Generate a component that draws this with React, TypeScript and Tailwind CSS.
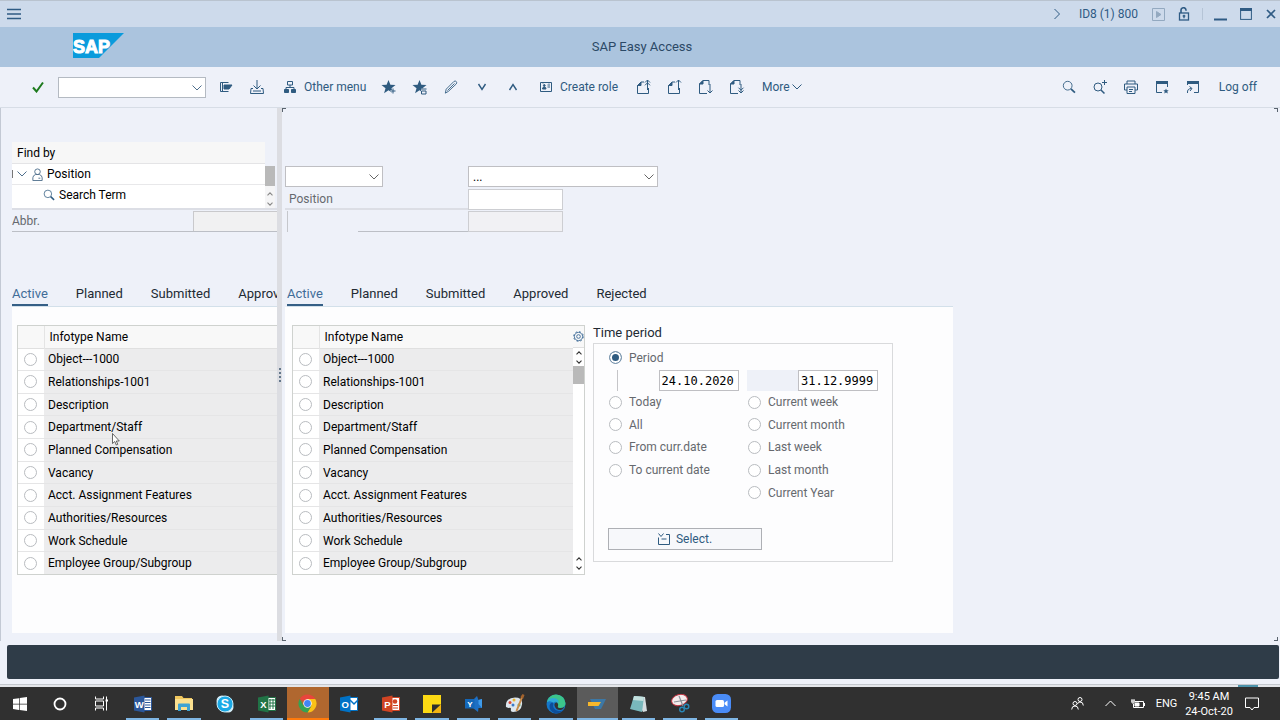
import type { ReactNode } from "react";

type IconProps = { children: ReactNode; size?: number; box?: string; className?: string };

function Icon({ children, size = 16, box = "0 0 16 16", className = "" }: IconProps) {
  return (
    <svg
      width={size}
      height={size}
      viewBox={box}
      fill="none"
      stroke="currentColor"
      strokeWidth="1"
      aria-hidden="true"
      className={`shrink-0 ${className}`}
    >
      {children}
    </svg>
  );
}

const ChevronDown = ({ className = "" }: { className?: string }) => (
  <svg width="10" height="6" viewBox="0 0 10 6" fill="none" stroke="currentColor" aria-hidden="true" className={className}>
    <path d="M.5.5 5 5 9.5.5" />
  </svg>
);

const SmallChevron = ({ up = false }: { up?: boolean }) => (
  <svg width="6" height="4" viewBox="0 0 6 4" fill="none" stroke="currentColor" strokeWidth="1.1" aria-hidden="true">
    <path d={up ? "M.5 3.3 3 .8l2.5 2.5" : "M.5.7 3 3.2 5.5.7"} />
  </svg>
);

const SearchIcon = ({ size = 14 }: { size?: number }) => (
  <Icon size={size}>
    <circle cx="6.5" cy="6.5" r="5" />
    <path d="m10.2 10.2 4.6 4.3" strokeWidth="2" />
  </Icon>
);

const star = "M6.5 0 8.400 4.800l5.100.2-4 3.200 1.400 5-4.400-2.900-4.400 2.900 1.400-5-4-3.200 5.100-.2Z";

function ToolButton({ label, children }: { label: string; children: ReactNode }) {
  return (
    <button aria-label={label} className="flex h-8 w-[31px] shrink-0 items-center justify-center">
      {children}
    </button>
  );
}

function TitleBar() {
  return (
    <div className="flex h-[27px] shrink-0 items-center border-t border-[#b9c3cf] bg-[#cddaeb] text-[#2f5b84]">
      <button aria-label="Menu" className="flex h-6 w-7 items-center justify-center">
        <svg width="14" height="12" viewBox="0 0 14 12" stroke="currentColor" strokeWidth="1.500" aria-hidden="true">
          <path d="M0 1.500h14M0 6h14M0 10.500h14" />
        </svg>
      </button>
      <div className="ml-auto flex items-center">
        <button aria-label="Expand" className="flex w-11 justify-center">
          <Icon size={12} box="0 0 12 12">
            <path d="m3.500 1 5 5-5 5" />
          </Icon>
        </button>
        <span>ID8 (1) 800</span>
        <button aria-label="Record" className="ml-2 flex w-6 justify-center text-[#93a9c0]">
          <Icon size={13} box="0 0 13 13">
            <path d="M.5.5h12v12H.5z" />
            <path d="M4.500 3.500v6l4.500-3z" fill="currentColor" />
          </Icon>
        </button>
        <button aria-label="Unlock" className="flex w-7 justify-center">
          <Icon size={14} box="0 0 14 14">
            <path d="M4 6V3.500a2.500 2.500 0 0 1 5-.5v.8" strokeWidth="1.600" />
            <rect x="2.500" y="6" width="9" height="7" strokeWidth="1.300" />
            <path d="M7 7.800v3.400M5.700 9h2.600" strokeWidth="1.300" />
          </Icon>
        </button>
        <span className="mx-1 h-3 w-px bg-[#b5c4d6]" />
        <button aria-label="Minimize" className="flex w-[26px] justify-center">
          <Icon size={13} box="0 0 13 13">
            <path d="M0 11.500h13" strokeWidth="2" />
          </Icon>
        </button>
        <button aria-label="Maximize" className="flex w-[26px] justify-center">
          <Icon size={12} box="0 0 12 12">
            <rect x=".6" y=".6" width="10.800" height="10.800" />
            <path d="M0 1.500h12" strokeWidth="3" />
          </Icon>
        </button>
        <button aria-label="Close" className="flex w-[21px] justify-end pr-1">
          <Icon size={10} box="0 0 10 10">
            <path d="m1 1 8 8M9 1 1 9" strokeWidth="1.700" />
          </Icon>
        </button>
      </div>
    </div>
  );
}

function Header() {
  return (
    <header className="grid h-10 shrink-0 grid-cols-[1fr_auto_1fr] items-center bg-[#abc4de]">
      <svg width="51" height="25" viewBox="0 0 51 25" role="img" aria-label="SAP" className="mb-1 ml-[73px]">
        <path d="M0 0h51L26 25H0Z" fill="#0a9bdc" />
        <text x="0" y="19.500" fontFamily="Liberation Sans, sans-serif" fontWeight="700" fontSize="18" fill="#fff" stroke="#fff" strokeWidth="1">
          SAP
        </text>
      </svg>
      <h1 className="pl-1 text-[13px] text-[#2b4966]">SAP Easy Access</h1>
    </header>
  );
}

function PageIcon({ up, double }: { up: boolean; double: boolean }) {
  return (
    <Icon>
      <path d={up ? "M8 3H5L1.500 6.500v8h11V9" : "M11 6V1.500H5L1.500 5v9.500H9"} />
      <path d={up ? "M5 3v3.500H1.500Z" : "M5 1.500V5H1.500Z"} fill="currentColor" />
      <path d={up ? "M11.500 11V1M9 3.500 11.500 1 14 3.500" : "M12 5v9M9.500 11.500 12 14l2.500-2.500"} />
      {double && <path d={up ? "M9 6.300l2.500-2.500L14 6.300" : "M9.500 8.700 12 11.200l2.500-2.500"} />}
    </Icon>
  );
}

function Toolbar() {
  return (
    <div className="flex h-[41px] shrink-0 items-center border-b border-[#d7dde6] text-[#2f5b80]">
      <button aria-label="Enter" className="ml-[22px] flex w-8 justify-center text-[#1d7a1d]">
        <Icon size={12} box="0 0 12 12">
          <path d="m1 6.500 3.500 4L11 1.500" strokeWidth="2" />
        </Icon>
      </button>
      <div className="relative mr-1 ml-1 h-[21px] w-[148px] text-[#4f6f8d]">
        <input aria-label="Command" className="size-full border border-[#b4bac2] bg-white px-1" />
        <ChevronDown className="pointer-events-none absolute top-2 right-1" />
      </div>
      <ToolButton label="Open menu">
        <Icon size={14} box="0 0 14 14">
          <path d="M9.500 2.500h-8v9h8M3.500 2.500v9" />
          <path d="M5 5h8l-3 4H5z" fill="currentColor" />
        </Icon>
      </ToolButton>
      <ToolButton label="Save">
        <Icon size={14} box="0 0 14 14">
          <path d="M7 0v8.500M3.500 5.500 7 9l3.500-3.500M3 8.500H1L.5 13.500h13l-.5-5h-2M3 11h8" />
        </Icon>
      </ToolButton>
      <button className="flex h-8 w-[101px] items-center gap-2 pl-3">
        <Icon size={12} box="0 0 12 12">
          <path d="M3.500.5h5v3.500h-5zM6 4v2.500M2 8.500v-2h8v2" />
          <path d="M.5 8.500h4v3h-4zM7.500 8.500h4v3h-4z" fill="currentColor" />
        </Icon>
        Other menu
      </button>
      <ToolButton label="Add favorite">
        <Icon>
          <path d={star} transform="translate(1 1)" fill="currentColor" stroke="none" />
          <path d="M12 9.500v5.500M9.500 12h5" stroke="#eef1f9" strokeWidth="2" />
          <path d="M12 9.500v5M9.500 12h5" />
        </Icon>
      </ToolButton>
      <ToolButton label="Delete favorite">
        <Icon>
          <path d={star} transform="translate(1 1)" fill="currentColor" stroke="none" />
          <path d="M9 9.500h6v6H9z" fill="#eef1f9" stroke="none" />
          <path d="M9 10h5.500M9.500 12h4.500v3H9.500z" />
        </Icon>
      </ToolButton>
      <ToolButton label="Edit">
        <Icon size={14}>
          <path d="m2.500 10.500 9-9q1.500-.8 2.500.3t0 2.700l-9 8.500L1.500 15Z M4 12l8-8" />
        </Icon>
      </ToolButton>
      <ToolButton label="Move down">
        <Icon size={10} box="0 0 10 10">
          <path d="M1.500 2 5 7.500 8.500 2" strokeWidth="1.400" />
        </Icon>
      </ToolButton>
      <ToolButton label="Move up">
        <Icon size={10} box="0 0 10 10">
          <path d="M1.500 8 5 2.500 8.500 8" strokeWidth="1.400" />
        </Icon>
      </ToolButton>
      <button className="flex h-8 w-[100px] items-center gap-2 pl-3">
        <Icon size={12} box="0 0 12 10">
          <path d="M.5.500h11v9H.5zM7.500 3h2.500M7.500 5h2.500M3 0v1.500M9 0v1.500" />
          <path d="M2.500 7q0-2 1.800-2T6 7Z" fill="currentColor" />
          <circle cx="4.300" cy="3.500" r=".9" fill="currentColor" />
        </Icon>
        Create role
      </button>
      <ToolButton label="First page"><PageIcon up double /></ToolButton>
      <ToolButton label="Previous page"><PageIcon up double={false} /></ToolButton>
      <ToolButton label="Next page"><PageIcon up={false} double={false} /></ToolButton>
      <ToolButton label="Last page"><PageIcon up={false} double /></ToolButton>
      <button className="flex h-8 items-center gap-0.5 pl-2.5">
        More
        <ChevronDown />
      </button>
      <div className="ml-auto flex items-center">
        <ToolButton label="Find"><SearchIcon /></ToolButton>
        <ToolButton label="Find next">
          <Icon>
            <circle cx="6" cy="8" r="4" />
            <path d="m9 11 3.500 3.500" strokeWidth="1.500" />
            <path d="M12.500 1v5M10 3.500h5" />
          </Icon>
        </ToolButton>
        <ToolButton label="Print">
          <Icon size={14} box="0 0 14 14">
            <path d="M3 4V1h8v3M3 10H.500V4h13v6H11M3 7h8v6.500H3zM5 9.500h4M5 11.500h3" />
          </Icon>
        </ToolButton>
        <ToolButton label="New window">
          <Icon size={14} box="0 0 14 14">
            <path d="M7 12.500H1.500V2h11v5" />
            <path d="M1 2.500h12" strokeWidth="3" />
            <path d="m11 8.500.8 1.700h1.900l-1.400 1.300.5 1.900-1.800-1-1.700 1 .4-1.900-1.400-1.300h1.900Z" fill="currentColor" stroke="none" />
          </Icon>
        </ToolButton>
        <ToolButton label="Create shortcut">
          <Icon size={14} box="0 0 14 14">
            <path d="M1.500 5V2h11v10.500H8" />
            <path d="M1 2.500h12" strokeWidth="3" />
            <path d="M1.500 13Q1 8.500 5.500 8.500M3.500 6.500l2.500 2-2 2.500" />
          </Icon>
        </ToolButton>
        <button className="h-8 pr-[23px] pl-2.5">Log off</button>
      </div>
    </div>
  );
}

const tabNames = ["Active", "Planned", "Submitted", "Approved", "Rejected"];

function Tabs({ count }: { count: number }) {
  return (
    <div role="tablist" className="flex h-[27px] shrink-0 gap-7 border-b border-[#d3e0ea] text-[13px] whitespace-nowrap text-[#222a33]">
      {tabNames.slice(0, count).map((t, i) => (
        <button
          key={t}
          role="tab"
          aria-selected={i === 0}
          className={`border-b-2 pt-1 ${i === 0 ? "border-[#355f86] text-[#3f6c98]" : "border-transparent"}`}
        >
          {t}
        </button>
      ))}
    </div>
  );
}

const infotypes = [
  "Object---1000",
  "Relationships-1001",
  "Description",
  "Department/Staff",
  "Planned Compensation",
  "Vacancy",
  "Acct. Assignment Features",
  "Authorities/Resources",
  "Work Schedule",
  "Employee Group/Subgroup",
];

const radio =
  "block size-[13px] shrink-0 appearance-none rounded-full border border-[#b9bcc0] bg-white checked:border-[#7d98b0] checked:bg-[#2f5b80] checked:shadow-[inset_0_0_0_2px_#fff]";

function InfotypeTable({ group }: { group: string }) {
  return (
    <table className="h-[248px] w-full border-collapse text-left whitespace-nowrap text-black">
      <thead>
        <tr className="h-[22px] border-b border-[#e0e0e0] bg-[#f8f8f8]">
          <th className="w-[26px] border-r border-[#e4e4e4]" />
          <th className="pl-[5px] font-normal">Infotype Name</th>
        </tr>
      </thead>
      <tbody>
        {infotypes.map((name, i) => (
          <tr key={name} className="border-b border-[#e5e5e6] last:border-0">
            <td className="bg-white pl-1.5">
              <input type="radio" id={`${group}-${i}`} name={group} className={radio} />
            </td>
            <td className="bg-[#ececed] pl-1">
              <label htmlFor={`${group}-${i}`}>{name}</label>
            </td>
          </tr>
        ))}
      </tbody>
    </table>
  );
}

function LeftPane() {
  return (
    <section className="flex w-[277px] shrink-0 flex-col overflow-hidden border-l border-[#c3c9d4] pb-2 pl-[11px]">
      <div className="mt-[34px] flex shrink-0 text-black">
        <div className="w-[253px]">
          <div className="flex h-[22px] items-center border-b border-[#e4e4e6] bg-[#f7f7f7] pl-[5px]">Find by</div>
          <div className="flex h-[21px] items-center border-b border-[#e8e8ea] bg-white">
            <span className="h-2 w-px bg-[#777]" />
            <ChevronDown className="mr-1 ml-1 text-[#4f6f8d]" />
            <Icon size={13} box="0 0 13 14" className="mr-[3px] text-[#4f6f8d]">
              <circle cx="6.500" cy="4" r="3" />
              <path d="M1.500 13.500v-3q0-2.500 3-3.500h4q3 1 3 3.500v3zM7.500 11h2" />
            </Icon>
            Position
          </div>
          <div className="flex h-[23px] items-center gap-1 bg-white pb-1 pl-[31px]">
            <span className="text-[#2f5b80]"><SearchIcon size={12} /></span>
            Search Term
          </div>
        </div>
        <div className="mt-6 flex w-2.5 flex-col items-center gap-1.5 bg-[#f5f5f6] text-[#888]">
          <span className="h-5 w-full bg-[#b9b9b9]" />
          <SmallChevron up />
          <SmallChevron />
        </div>
      </div>
      <div className="h-0.5 shrink-0 bg-[#dcdee5]" />
      <div className="mt-px flex h-[21px] shrink-0 items-stretch border-b border-[#bcbfc6] text-[#66696e]">
        <label htmlFor="abbr" className="flex w-[181px] items-center">Abbr.</label>
        <input id="abbr" readOnly className="min-w-0 flex-1 border-t border-l border-[#c9c9cc] bg-[#f1f1f2]" />
      </div>
      <div className="mt-12 flex flex-1 flex-col">
        <Tabs count={4} />
        <div className="flex-1 bg-[#fdfdfe] pt-[18px] pl-[5px]">
          <div className="border-y border-l border-[#cfd2cf]">
            <InfotypeTable group="overview" />
          </div>
        </div>
      </div>
    </section>
  );
}

function Splitter() {
  return (
    <div className="flex w-[5px] shrink-0 flex-col items-center justify-center gap-0.5 bg-[#dcdde2]">
      {[0, 1, 2, 3].map((n) => (
        <span key={n} className="size-0.5 rounded-full bg-[#3c556e]" />
      ))}
    </div>
  );
}

function DropDown({ label, value, className }: { label: string; value: string; className: string }) {
  return (
    <div className={`relative h-[21px] text-[#666] ${className}`}>
      <select aria-label={label} className="size-full appearance-none border border-[#bfbfc3] bg-white px-1 text-black">
        <option>{value}</option>
      </select>
      <ChevronDown className="pointer-events-none absolute top-2 right-1" />
    </div>
  );
}

function PeriodRadio({ label, checked = false }: { label: string; checked?: boolean }) {
  return (
    <label className="flex items-center gap-[7px]">
      <input type="radio" name="period" defaultChecked={checked} className={radio} />
      {label}
    </label>
  );
}

function TimePeriod() {
  const date = "h-[21px] w-20 border border-[#bfbfc3] bg-white px-0.5 font-['DejaVu_Sans_Mono',monospace] text-[12px] text-black";
  return (
    <section className="ml-2 w-[300px]">
      <h2 className="h-[18px] text-[13px] leading-4 text-[#222a33]">Time period</h2>
      <div className="border border-[#d9dadc] px-[14px] pt-[3px] pb-[11px] text-[#66696e]">
        <div className="pl-px">
          <div className="flex h-[21px] items-center">
            <PeriodRadio label="Period" checked />
          </div>
          <div className="mt-0.5 flex">
            <span className="ml-2 w-[42px] border-l border-[#c5c5c8]" />
            <input aria-label="From" defaultValue="24.10.2020" className={date} />
            <span className="ml-2 w-[52px] bg-[#eef1f8]" />
            <input aria-label="To" defaultValue="31.12.9999" className={date} />
          </div>
          <div className="grid h-[113px] grid-flow-col grid-cols-[139px_1fr] grid-rows-5">
            {["Today", "All", "From curr.date", "To current date"].map((l) => <PeriodRadio key={l} label={l} />)}
            <span />
            {["Current week", "Current month", "Last week", "Last month", "Current Year"].map((l) => <PeriodRadio key={l} label={l} />)}
          </div>
        </div>
        <button className="mt-6 flex h-[22px] w-[154px] items-center justify-center gap-1.5 border border-[#aeb0b5] bg-[#f7f8fb] text-[#2f5b80]">
          <Icon size={12} box="0 0 12 12">
            <path d="m.5.500 2.500 3 2.500-3M8 1.500h3.500v10H.500V4.500M3.500 6h5" />
          </Icon>
          Select.
        </button>
      </div>
    </section>
  );
}

function RightPane() {
  const corner = "absolute size-1 border-[#59636e]";
  return (
    <section className="relative flex min-w-0 flex-1 flex-col pb-2 pl-[3px]">
      <span className={`${corner} top-0 left-0 border-t border-l`} />
      <span className={`${corner} top-0 right-0.5 border-t border-r`} />
      <span className={`${corner} bottom-0 left-0 border-b border-l`} />
      <span className={`${corner} right-0.5 bottom-0 border-r border-b`} />
      <div className="mt-[58px] flex shrink-0 gap-[85px]">
        <DropDown label="Plan version" value="" className="w-[98px]" />
        <DropDown label="Object" value="..." className="w-[190px]" />
      </div>
      <div className="mt-0.5 flex h-[21px] shrink-0 text-[#66696e]">
        <label htmlFor="position" className="flex w-[183px] items-center border-b-2 border-[#dcdee5] pl-1">Position</label>
        <input id="position" className="w-[95px] border border-[#cdced2] bg-white" />
      </div>
      <div className="mt-px flex h-[21px] shrink-0">
        <span className="w-[3px] border-r border-[#c5c7cc]" />
        <span className="ml-[70px] w-[110px] border-b border-[#bcbfc6]" />
        <input aria-label="Abbreviation" readOnly className="w-[95px] border border-[#cdced2] bg-[#f1f1f4]" />
      </div>
      <div className="mt-12 flex w-[668px] flex-1 flex-col">
        <div className="pl-0.5">
          <Tabs count={5} />
        </div>
        <div className="flex flex-1 items-start bg-[#fdfdfe] pt-[18px] pl-[7px]">
          <div className="flex w-[293px] border border-[#cfd2cf]">
            <div className="min-w-0 flex-1">
              <InfotypeTable group="detail" />
            </div>
            <div className="flex w-[11px] flex-col items-center bg-white text-[#333]">
              <button aria-label="Settings" className="flex h-[22px] w-full shrink-0 items-center justify-center border-b border-[#e0e0e0] bg-[#f8f8f8] text-[#3f6c98]">
                <Icon size={11} box="0 0 12 12">
                  <circle cx="6" cy="6" r="4.500" />
                  <circle cx="6" cy="6" r="5.300" strokeDasharray="2 2.160" />
                  <circle cx="6" cy="6" r="2" />
                </Icon>
              </button>
              <div className="flex h-[18px] flex-col justify-end gap-[5px] pb-0.5">
                <SmallChevron up />
                <SmallChevron />
              </div>
              <span className="h-[18px] w-full bg-[#b9b9b9]" />
              <div className="mt-auto flex flex-col gap-[5px] pb-1">
                <SmallChevron up />
                <SmallChevron />
              </div>
            </div>
          </div>
          <TimePeriod />
        </div>
      </div>
    </section>
  );
}

type TaskbarApp = { name: string; icon: ReactNode; state?: "open" | "alert" | "active" };

function OfficeIcon({ letter, color, children }: { letter: string; color: string; children: ReactNode }) {
  return (
    <svg width="20" height="18" viewBox="0 0 20 18" aria-hidden="true">
      <path d="M10 2.500h8.500v13H10z" fill="#fff" stroke={color} />
      {children}
      <path d="M1 2.500 11.500.500v17L1 15.500Z" fill={color} />
      <text x="6.300" y="12.500" textAnchor="middle" fontFamily="Liberation Sans, sans-serif" fontWeight="700" fontSize="9.500" fill="#fff">
        {letter}
      </text>
    </svg>
  );
}

const apps: TaskbarApp[] = [
  { name: "Word", state: "open", icon: <OfficeIcon letter="W" color="#2b579a"><path d="M12 5h5.500M12 7.500h5.500M12 10h5.500M12 12.500h5.500" stroke="#2b579a" /></OfficeIcon> },
  {
    name: "File Explorer",
    state: "open",
    icon: (
      <svg width="20" height="17" viewBox="0 0 20 17" aria-hidden="true">
        <path d="M1 1h7l1.500 2H18v12H1Z" fill="#f0c75e" />
        <path d="M1 4h18v11H1Z" fill="#fbe08f" />
        <path d="M4 16V9.500q0-1 1-1h10q1 0 1 1V16h-3v-4H7v4Z" fill="#3fa3d3" />
      </svg>
    ),
  },
  {
    name: "Skype",
    icon: (
      <svg width="18" height="18" viewBox="0 0 18 18" aria-hidden="true">
        <circle cx="6" cy="6" r="5.500" fill="#d8f2fc" />
        <circle cx="12" cy="12" r="5.500" fill="#d8f2fc" />
        <circle cx="9" cy="9" r="8" fill="#1ba9e6" stroke="#c7edfb" />
        <text x="9" y="13.300" textAnchor="middle" fontFamily="Liberation Sans, sans-serif" fontWeight="700" fontSize="12.500" fill="#fff">S</text>
      </svg>
    ),
  },
  { name: "Excel", state: "open", icon: <OfficeIcon letter="X" color="#217346"><path d="M13 4v10M16 4v10M12 5h6M12 8h6M12 11h6" stroke="#217346" /></OfficeIcon> },
  {
    name: "Chrome",
    state: "alert",
    icon: (
      <svg width="19" height="19" viewBox="0 0 19 19" aria-hidden="true">
        <path d="M9.500 9.500 1.700 5A9 9 0 0 1 17.300 5Z" fill="#e8453c" />
        <path d="M9.500 9.500V5h7.800a9 9 0 0 1-7.800 13.500l3.900-6.700Z" fill="#fbc116" />
        <path d="M1.700 5 5.600 11.800l3.900 2.200L9.500 18.500A9 9 0 0 1 1.700 5Z" fill="#34a353" />
        <path d="m9.500 18.500 4-6.800-4 2-3.900-2Z" fill="#34a353" />
        <circle cx="9.500" cy="9.500" r="4.200" fill="#fff" />
        <circle cx="9.500" cy="9.500" r="3.400" fill="#4285f4" />
      </svg>
    ),
  },
  { name: "Outlook", icon: <OfficeIcon letter="O" color="#0072c6"><path d="M11 5l4 4 4-4" stroke="#0072c6" strokeWidth="1.500" fill="none" /></OfficeIcon> },
  { name: "PowerPoint", state: "open", icon: <OfficeIcon letter="P" color="#d04423"><circle cx="14" cy="6.500" r="2.300" fill="#d04423" /><path d="M12 10.500h5M12 13h5" stroke="#d04423" /></OfficeIcon> },
  {
    name: "Sticky Notes",
    state: "open",
    icon: (
      <svg width="18" height="18" viewBox="0 0 18 18" aria-hidden="true">
        <path d="M0 0h18v18H0Z" fill="#fcd913" />
        <path d="M9 9.500h9L9 18Z" fill="#2f2f2f" />
        <path d="M18 9.500V18H9Z" fill="#f2b311" />
      </svg>
    ),
  },
  {
    name: "Yammer",
    state: "open",
    icon: (
      <svg width="19" height="18" viewBox="0 0 19 18" aria-hidden="true">
        <path d="M9 5 13 1l1.500 4L18 4v9l-3.500 0L14 17 9 13Z" fill="#1d6fc4" />
        <path d="m14.500 5 3.500-1v9l-3.500-4Z" fill="#3f9bea" />
        <path d="M1 4h9.500v9.500H1Z" fill="#1467b8" />
        <text x="5.800" y="11.700" textAnchor="middle" fontFamily="Liberation Sans, sans-serif" fontWeight="700" fontSize="8" fill="#fff">Y</text>
      </svg>
    ),
  },
  {
    name: "Paint",
    state: "open",
    icon: (
      <svg width="20" height="19" viewBox="0 0 20 19" aria-hidden="true">
        <path d="M1 13Q0 4 10 3.500q8 0 7 7Q16 18 8 18q-3 0-2-3 0-2-2.500-1Z" fill="#dde6ee" />
        <circle cx="5" cy="8.500" r="1.500" fill="#d9483b" />
        <circle cx="9" cy="6" r="1.500" fill="#e9b430" />
        <circle cx="8" cy="11" r="1.500" fill="#3c79c9" />
        <circle cx="14" cy="11" r="1.500" fill="#45a355" />
        <path d="m17.500 2-6 15" stroke="#c88b4a" strokeWidth="2" />
        <path d="m15.500 3 2-3 2 1-1.500 4Z" fill="#a2622c" />
      </svg>
    ),
  },
  {
    name: "Edge",
    state: "open",
    icon: (
      <svg width="20" height="20" viewBox="0 0 20 20" aria-hidden="true">
        <circle cx="10" cy="10" r="9.500" fill="#1577c9" />
        <path d="M.8 8Q3 .500 10 .500q8.500.500 9.500 8.500 0 5-5.500 5-3 0-2.500-1.500Q13 10 10.500 8 6 4.500.8 8Z" fill="#3cc58b" />
        <path d="M.7 8.500Q4 2.500 10 4.500q3 1.500 2.500 4.500Q9 6 7.500 9.500 4 5.500.7 8.500Z" fill="#2fa9d9" />
        <path d="M7.500 8.500q-2 7 5 8.500 3 .500 5.500-1.500-4 4.500-9 4Q3 17 3.500 11.500 4.500 8 7.500 8.500Z" fill="#0d4f9b" />
        <path d="M18.500 12.500q-2 2-5 1.500-2.500-.5-1.500-2 .8-2-1-3.500-3 0-2.500 3 1.500 5 6.500 4.500 2.500-.8 3.500-3.500Z" fill="#333" />
      </svg>
    ),
  },
  {
    name: "SAP Logon",
    state: "active",
    icon: (
      <svg width="20" height="12" viewBox="0 0 20 12" aria-hidden="true">
        <path d="M3 1h16l-5 10H8Z" fill="#3c78a6" />
        <path d="M1 4h13l-2.500 4H1Z" fill="#f7b72b" />
      </svg>
    ),
  },
  {
    name: "Notepad",
    state: "open",
    icon: (
      <svg width="20" height="18" viewBox="0 0 20 18" aria-hidden="true">
        <path d="m5 1 11 1 2 14-4 1Z" fill="#d5dde0" />
        <path d="m5 1 10 1-2 15-12-3Z" fill="#79b8bc" />
        <path d="m5 1 10 1-.6 4L4 5Z" fill="#c3e0de" />
      </svg>
    ),
  },
  {
    name: "Snipping Tool",
    state: "open",
    icon: (
      <svg width="20" height="19" viewBox="0 0 20 19" aria-hidden="true">
        <ellipse cx="9.500" cy="6" rx="8" ry="5.500" fill="#f4ebec" stroke="#bd3442" transform="rotate(-15 9.500 6)" />
        <path d="m4 8 12-2M9 2l4 10" stroke="#8c9299" strokeWidth="1.200" />
        <g fill="none" stroke="#2b86b5" strokeWidth="1.400"><circle cx="12" cy="15.500" r="2.300" /><circle cx="16.500" cy="12.500" r="2.300" /></g>
      </svg>
    ),
  },
  {
    name: "Zoom",
    state: "open",
    icon: (
      <svg width="19" height="19" viewBox="0 0 19 19" aria-hidden="true">
        <rect width="19" height="19" rx="5.500" fill="#4a8cf7" />
        <rect x="3.500" y="6" width="8.500" height="7" rx="1.500" fill="#fff" />
        <path d="m12.500 8.800 3-2.300v6l-3-2.300Z" fill="#fff" />
      </svg>
    ),
  },
];

const appCell = {
  none: "",
  open: "after:inset-x-1 after:bg-[#7fb6e4]",
  alert: "bg-[#b0672f] after:inset-x-0 after:bg-[#ff7a0c]",
  active: "bg-[#5b5b5b] after:inset-x-0 after:bg-[#7fb6e4]",
};

function Taskbar() {
  return (
    <footer className="flex h-[33px] shrink-0 items-stretch bg-[#303030] text-white">
      <button aria-label="Start" className="flex w-10 items-center justify-center">
        <svg width="14" height="14" viewBox="0 0 14 14" fill="currentColor" aria-hidden="true">
          <path d="M0 2 6 1.200v5.500H0ZM6.700 1 14 0v6.700H6.700ZM0 7.400h6v5.500L0 12ZM6.700 7.400H14V14l-7.300-1Z" />
        </svg>
      </button>
      <button aria-label="Search" className="flex w-10 items-center justify-center">
        <Icon size={14} box="0 0 14 14"><circle cx="7" cy="7" r="5.500" strokeWidth="1.800" /></Icon>
      </button>
      <button aria-label="Task view" className="flex w-[42px] items-center justify-center">
        <Icon size={15} box="0 0 15 14">
          <path d="M1.500 0v2.500h8V0M1.500 14v-2.500h8V14M1.500 4.500h8v5h-8zM12.500 0v14" />
          <path d="M11.500 4h2.500" strokeWidth="2" />
        </Icon>
      </button>
      <div className="grid w-[620px] grid-cols-[repeat(15,minmax(0,1fr))]">
        {apps.map((a) => (
          <button
            key={a.name}
            aria-label={a.name}
            className={`relative flex items-center justify-center after:absolute after:bottom-0 after:h-0.5 ${appCell[a.state ?? "none"]}`}
          >
            {a.icon}
          </button>
        ))}
      </div>
      <div className="ml-auto flex items-center">
        <button aria-label="People" className="flex w-[33px] justify-center">
          <Icon size={13} box="0 0 13 13">
            <circle cx="4" cy="6.500" r="2" />
            <path d="M.7 12.500q0-3.500 3.300-3.500t3.300 3.500" />
            <circle cx="9" cy="2.500" r="2" />
            <path d="M6.500 7Q7 5 9 5q3.300 0 3.300 3.500" />
          </Icon>
        </button>
        <button aria-label="Show hidden icons" className="flex w-[33px] justify-center">
          <Icon size={11} box="0 0 11 7"><path d="m.5 6 5-5 5 5" /></Icon>
        </button>
        <button aria-label="Battery" className="flex w-[22px] justify-center">
          <Icon size={14} box="0 0 14 10">
            <path d="M4 2.500h8.500v6h-10V5M13.500 4v3M0 2h4M1 0v2M3 0v2M1 2v2h2V2" />
            <path d="M4 4h4v3H4z" fill="currentColor" />
          </Icon>
        </button>
        <span className="w-[35px] text-center text-[11px]">ENG</span>
        <time className="w-[50px] text-center text-[11px] leading-[15px] whitespace-nowrap">
          9:45 AM
          <br />
          24-Oct-20
        </time>
        <button aria-label="Notifications" className="mr-2.5 flex w-9 justify-center">
          <Icon size={14} box="0 0 14 14"><path d="M.5 1h13v9.500H9l-2 2.500-2-2.500H.5Z" /></Icon>
        </button>
      </div>
    </footer>
  );
}

export default function App() {
  return (
    <div className="relative flex min-h-screen flex-col bg-[#eef1f9] font-[Roboto,'Liberation_Sans',sans-serif] text-[12px] leading-4">
      <TitleBar />
      <Header />
      <Toolbar />
      <main className="flex flex-1">
        <LeftPane />
        <Splitter />
        <RightPane />
      </main>
      <div role="status" className="mt-1 mr-px mb-[5px] ml-[7px] h-[34px] shrink-0 rounded-[2px] bg-[#2f3c48]" />
      <div className="flex h-[3px] shrink-0 justify-end border-t border-[#c4c8ce] bg-[#e4e6ea] pr-[22px]">
        <span className="w-5 bg-[#4c93ab]" />
      </div>
      <Taskbar />
      <svg width="8" height="13" viewBox="0 0 8 13" aria-hidden="true" className="pointer-events-none absolute top-[433px] left-[112px]">
        <path d="M.5.500v10l2.300-2 1.500 3.500 1.500-.7-1.500-3.300h3Z" fill="#fff" stroke="#444" strokeWidth=".8" />
      </svg>
    </div>
  );
}
